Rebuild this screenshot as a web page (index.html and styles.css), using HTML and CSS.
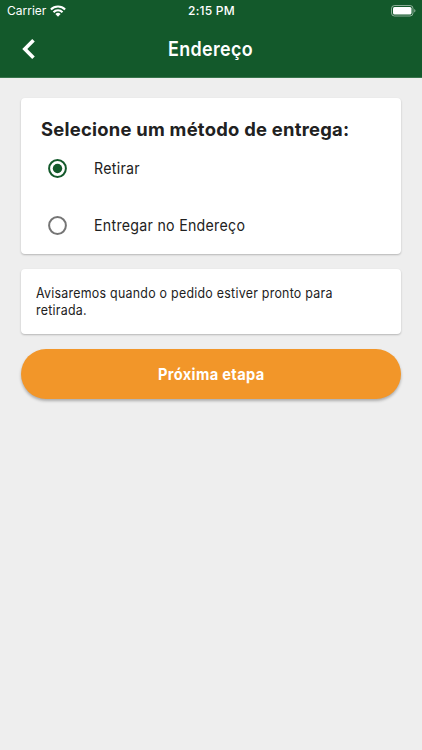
FILE: index.html
```html
<!DOCTYPE html>
<html lang="pt-BR">
<head>
<meta charset="utf-8">
<title>Endereço</title>
<link rel="stylesheet" href="styles.css">
</head>
<body>
<header class="header">
  <div class="status">
    <div class="carrier"><span class="carrier-name">Carrier</span>
      <svg class="wifi" width="16" height="12" viewBox="0 0 16 12"><g fill="none" stroke="#fff" stroke-width="2.100"><path d="M.9 4.400a10 10 0 0 1 14.200 0"/><path d="M3.500 7.200a6.200 6.200 0 0 1 9 0"/></g><path d="M5.400 9a3.600 3.600 0 0 1 5.200 0L8 11.700z" fill="#fff"/></svg>
    </div>
    <span class="clock">2:15 PM</span>
    <svg class="battery" width="25" height="12" viewBox="0 0 25 12"><rect x=".5" y=".5" width="21.500" height="10.500" rx="3" fill="none" stroke="#fff" stroke-opacity=".5"/><rect x="2" y="2" width="18.500" height="7.500" rx="1.500" fill="#fff"/><path d="M23.300 4c1.500.5 1.500 3 0 3.500z" fill="#fff" fill-opacity=".6"/></svg>
  </div>
  <div class="toolbar">
    <svg class="back" width="14" height="22" viewBox="0 0 14 22"><path d="M11.500 2.200 2.800 11l8.700 8.800" fill="none" stroke="#fff" stroke-width="3.600"/></svg>
    <h1 class="title"><span class="narrow">Endereço</span></h1>
  </div>
</header>
<main class="content">
  <section class="card methods">
    <h2 class="heading">Selecione um método de entrega:</h2>
    <div class="option"><svg class="radio" width="19" height="19" viewBox="0 0 19 19"><circle cx="9.500" cy="9.500" r="8.400" fill="none" stroke="#13592b" stroke-width="2"/><circle cx="9.500" cy="9.500" r="4.700" fill="#13592b"/></svg><span class="label">Retirar</span></div>
    <div class="option"><svg class="radio" width="19" height="19" viewBox="0 0 19 19"><circle cx="9.500" cy="9.500" r="8.400" fill="none" stroke="#757575" stroke-width="2"/></svg><span class="label">Entregar no Endereço</span></div>
  </section>
  <section class="card notice"><p>Avisaremos quando o pedido estiver pronto para<br>retirada.</p></section>
  <button class="next"><span class="narrow-bold">Próxima etapa</span></button>
</main>
</body>
</html>
```
FILE: styles.css
```css
* { box-sizing: border-box; }
body { margin: 0; min-height: 750px; background: #eee; color: #212121; font-family: Inter, sans-serif; }
.header { height: 78px; background: #13592b; color: #fff; border-bottom: 1px solid #38744b; }
.status { height: 22px; display: grid; grid-template-columns: 1fr auto 1fr; align-items: center; padding: 0 6px 0 7px; font-size: 12px; line-height: 20px; }
.carrier { display: flex; align-items: center; gap: 4px; height: 20px; }
.wifi { margin-bottom: 1px; }
.clock { height: 20px; font-weight: 500; letter-spacing: .25px; }
.battery { justify-self: end; margin-bottom: 1px; }
.toolbar { height: 55px; display: grid; grid-template-columns: 14px 1fr 14px; align-items: center; padding: 0 22px 2px; }
.title { margin: 0; text-align: center; font-size: 20px; line-height: 24px; font-weight: 600; }
.narrow { display: inline-block; transform: scaleX(.895); letter-spacing: .4px; }
.content { padding: 20px 21px; }
.card { background: #fff; border-radius: 4px; box-shadow: 0 1px 2px rgba(0,0,0,.24); }
.methods { height: 156px; padding: 18px 20px 0; }
.heading { margin: 0; height: 24px; line-height: 26px; font-size: 18.4px; font-weight: 700; letter-spacing: .25px; white-space: nowrap; }
.option { height: 57px; display: flex; align-items: center; gap: 27px; padding-left: 7px; font-size: 16px; }
.label { line-height: 18px; margin-bottom: 1px; transform: scaleX(.886); transform-origin: left; letter-spacing: .32px; }
.notice { height: 65px; margin: 15px 0; padding: 15px; font-size: 14px; line-height: 17px; }
.notice p { margin: 0; width: 390px; transform: scaleX(.886); transform-origin: left; letter-spacing: .29px; }
.next { display: block; width: 100%; height: 50px; padding: 0; border: 0; border-radius: 25px; background: #f29629; color: #fff; font: 700 16px Inter, sans-serif; box-shadow: 0 2px 3px rgba(0,0,0,.28); }
.narrow-bold { display: inline-block; transform: scaleX(.915); letter-spacing: .38px; }
```
